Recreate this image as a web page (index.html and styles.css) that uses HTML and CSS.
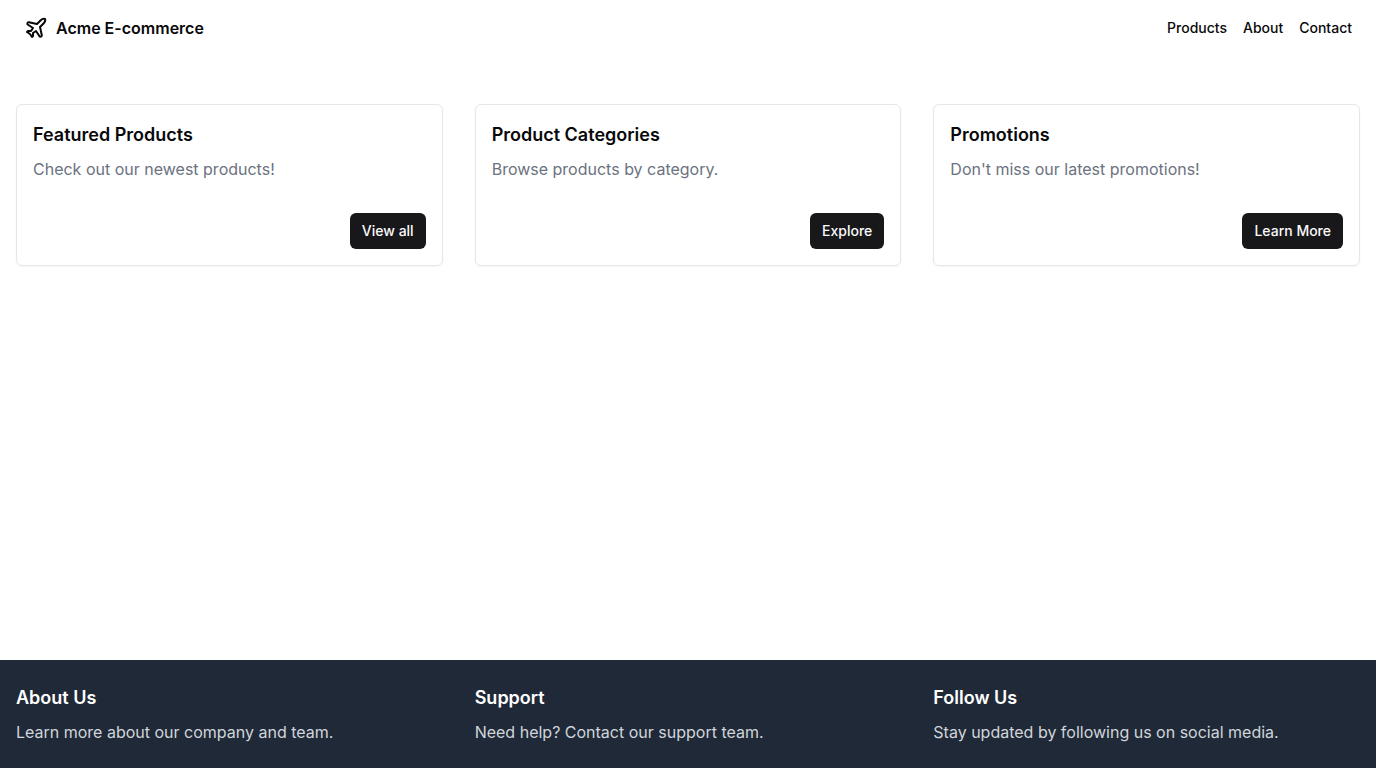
FILE: index.html
```html
<!DOCTYPE html>
<html lang="en">
<head>
<meta charset="utf-8">
<meta name="viewport" content="width=device-width, initial-scale=1">
<title>Acme E-commerce</title>
<link rel="stylesheet" href="styles.css">
</head>
<body>
<div class="page">
  <header class="header">
    <a class="brand" href="#">
      <svg class="brand-icon" viewBox="0 0 24 24" fill="none" stroke="currentColor" stroke-width="2" stroke-linecap="round" stroke-linejoin="round" aria-hidden="true"><path d="M17.8 19.2 16 11l3.5-3.5C21 6 21.5 4 21 3c-1-.5-3 0-4.500 1.500L13 8 4.800 6.200c-.5-.1-.9.1-1.100.5l-.3.5c-.2.5-.1 1 .3 1.300L9 12l-2 3H4l-1 1 3 2 2 3 1-1v-3l3-2 3.500 5.300c.3.4.8.5 1.300.3l.5-.2c.4-.3.6-.7.5-1.200z"/></svg>
      <span class="brand-name">Acme E-commerce</span>
    </a>
    <nav class="nav">
      <a class="nav-link" href="#">Products</a>
      <a class="nav-link" href="#">About</a>
      <a class="nav-link" href="#">Contact</a>
    </nav>
  </header>
  <main class="main">
    <section class="card">
      <h2 class="title">Featured Products</h2>
      <p class="text">Check out our newest products!</p>
      <div class="actions"><button class="button" type="button">View all</button></div>
    </section>
    <section class="card">
      <h2 class="title">Product Categories</h2>
      <p class="text">Browse products by category.</p>
      <div class="actions"><button class="button" type="button">Explore</button></div>
    </section>
    <section class="card">
      <h2 class="title">Promotions</h2>
      <p class="text">Don't miss our latest promotions!</p>
      <div class="actions"><button class="button" type="button">Learn More</button></div>
    </section>
  </main>
  <footer class="footer">
    <section>
      <h2 class="title">About Us</h2>
      <p class="text">Learn more about our company and team.</p>
    </section>
    <section>
      <h2 class="title">Support</h2>
      <p class="text">Need help? Contact our support team.</p>
    </section>
    <section>
      <h2 class="title">Follow Us</h2>
      <p class="text">Stay updated by following us on social media.</p>
    </section>
  </footer>
</div>
</body>
</html>
```
FILE: styles.css
```css
*, *::before, *::after {
  box-sizing: border-box;
}

body {
  margin: 0;
  background: #fff;
  color: #09090b;
  font-family: Inter, "Liberation Sans", sans-serif;
  font-size: 16px;
  line-height: 24px;
}

h2, p {
  margin: 0;
}

a {
  color: inherit;
  text-decoration: none;
}

.page {
  display: flex;
  flex-direction: column;
  min-height: 100vh;
}

.header {
  display: flex;
  align-items: center;
  justify-content: space-between;
  padding: 16px 24px;
}

.brand {
  display: flex;
  align-items: center;
  gap: 8px;
}

.brand-icon {
  width: 24px;
  height: 24px;
}

.brand-name {
  font-weight: 600;
}

.nav {
  display: flex;
  gap: 16px;
}

.nav-link {
  font-size: 14px;
  line-height: 20px;
  font-weight: 500;
}

.main {
  flex: 1;
  display: grid;
  grid-template-columns: repeat(3, minmax(0, 1fr));
  align-items: start;
  gap: 32px;
  padding: 48px 16px;
}

.card {
  padding: 16px;
  border: 1px solid #e5e7eb;
  border-radius: 6px;
  box-shadow: 0 1px 2px rgba(0, 0, 0, 0.05);
}

.title {
  margin-bottom: 8px;
  font-size: 18px;
  line-height: 28px;
  font-weight: 600;
}

.card .text {
  color: #6b7280;
}

.actions {
  display: flex;
  justify-content: flex-end;
  margin-top: 32px;
}

.button {
  height: 36px;
  padding: 0 12px;
  border: 0;
  border-radius: 6px;
  background: #18181b;
  color: #fafafa;
  font: 500 14px/20px Inter, "Liberation Sans", sans-serif;
  cursor: pointer;
}

.footer {
  display: grid;
  grid-template-columns: repeat(3, minmax(0, 1fr));
  gap: 32px;
  padding: 24px 16px;
  background: #1f2937;
  color: #fff;
}

.footer .text {
  color: #d1d5db;
}
```
